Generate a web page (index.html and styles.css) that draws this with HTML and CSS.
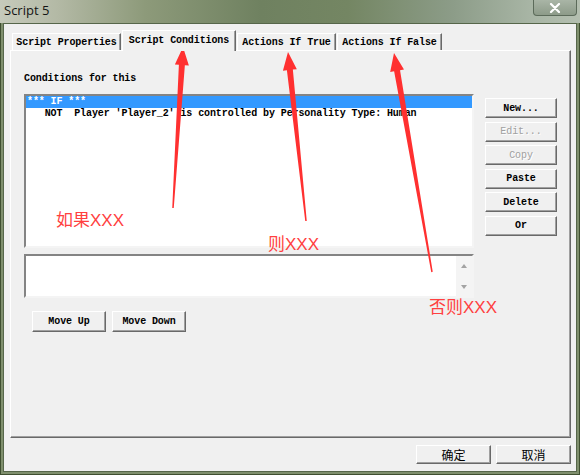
FILE: index.html
```html
<!DOCTYPE html>
<html>
<head>
<meta charset="utf-8">
<title>Script 5</title>
<link rel="stylesheet" href="styles.css">
</head>
<body>
<div class="window">
  <div class="titlebar">
    <span class="title">Script 5</span>
    <div class="close"><svg width="14" height="10" viewBox="0 0 14 10"><path d="M3 1 L11 9 M11 1 L3 9" stroke="#fff" stroke-width="2.2" stroke-linecap="round"/></svg></div>
  </div>
  <div class="frame">
    <div class="client">
      <div class="tabs">
        <div class="tab tab-props">Script Properties</div>
        <div class="tab tab-cond active">Script Conditions</div>
        <div class="tab tab-true">Actions If True</div>
        <div class="tab tab-false">Actions If False</div>
      </div>
      <div class="panel">
        <div class="label">Conditions for this</div>
        <div class="row">
          <div class="listbox">
            <div class="item selected">*** IF ***</div>
            <div class="item">   NOT  Player 'Player_2' is controlled by Personality Type: Human</div>
          </div>
          <div class="side">
            <button class="btn">New...</button>
            <button class="btn disabled">Edit...</button>
            <button class="btn disabled">Copy</button>
            <button class="btn">Paste</button>
            <button class="btn">Delete</button>
            <button class="btn">Or</button>
          </div>
        </div>
        <div class="memo">
          <div class="scroll"><span class="arr up"></span><span class="arr down"></span></div>
        </div>
        <div class="moves">
          <button class="btn move">Move Up</button>
          <button class="btn move">Move Down</button>
        </div>
      </div>
      <div class="footer">
        <button class="btn cjk">确定</button>
        <button class="btn cjk">取消</button>
      </div>
    </div>
  </div>
</div>

<svg class="arrows" width="580" height="475" viewBox="0 0 580 475">
  <polygon points="183,47 188.87,65.4 184.87,65.16 173.75,208.05 172.25,207.95 178.89,64.78 174.89,64.54"/>
  <polygon points="288,52 296.84,69.17 292.86,69.59 306.75,220.92 305.25,221.08 286.9,70.21 282.92,70.63"/>
  <polygon points="394,53 403.98,69.53 400.04,70.22 432.74,271.87 431.26,272.13 394.12,71.24 390.19,71.93"/>
</svg>
<div class="note n1">如果XXX</div>
<div class="note n2">则XXX</div>
<div class="note n3">否则XXX</div>
</body>
</html>
```

FILE: styles.css
```css
html, body {
  margin: 0;
  padding: 0;
}
body {
  width: 580px;
  height: 475px;
  overflow: hidden;
  position: relative;
  font-family: "Liberation Mono", "DejaVu Sans Mono", monospace;
  font-size: 10px;
  letter-spacing: -0.1px;
  color: #000;
  background: #d9e4de;
}
.window {
  height: 475px;
  display: flex;
  flex-direction: column;
  background: #7f8f6d;
}
.titlebar {
  height: 23px;
  flex: none;
  display: flex;
  justify-content: space-between;
  align-items: flex-start;
  background: linear-gradient(90deg, #c6cabb 0%, #b3b9a5 10%, #8d9a7a 25%, #6f8160 45%, #748663 60%, #8c9c88 78%, #a9b6a6 92%, #b4bfb0 100%);
}
.title {
  font-family: "Open Sans", "Noto Sans", sans-serif;
  font-size: 13px;
  letter-spacing: 0;
  line-height: 21px;
  color: #141414;
  padding-left: 4px;
}
.close {
  width: 44px;
  height: 16px;
  box-sizing: border-box;
  margin-right: 3px;
  border: 1px solid #5c6b5a;
  border-top: 0;
  border-radius: 0 0 4px 4px;
  background: linear-gradient(#a9b5a6, #8d9b89);
  display: flex;
  align-items: center;
  justify-content: center;
}
.frame {
  flex: 1;
  display: flex;
  padding: 0 3px 3px 3px;
  box-shadow: inset 1px 0 #3f4f30, inset -1px 0 #3f4f30, inset 0 -1px #3f4f30;
}
.client {
  flex: 1;
  display: flex;
  flex-direction: column;
  background: #f0f0f0;
  border: 1px solid #56664a;
  padding: 6px 5px 0 6px;
}
.tabs {
  height: 20px;
  display: flex;
  align-items: flex-end;
  gap: 1px;
  padding-left: 2px;
}
.tab {
  height: 17px;
  box-sizing: border-box;
  background: #f0f0f0;
  border-top: 1px solid #fff;
  border-left: 1px solid #fff;
  border-right: 1px solid #696969;
  box-shadow: inset -1px 0 #a0a0a0;
  text-align: center;
  line-height: 17px;
  font-weight: bold;
  white-space: nowrap;
}
.tab-props { width: 109px; }
.tab-cond { width: 114px; }
.tab-true { width: 99px; }
.tab-false { width: 105px; }
.tab.active {
  height: 21px;
  margin-bottom: -1px;
  line-height: 19px;
  position: relative;
  z-index: 1;
}
.panel {
  height: 388px;
  box-sizing: border-box;
  border: 1px solid;
  border-color: #fff #696969 #696969 #fff;
  box-shadow: inset -1px -1px #a0a0a0;
  padding: 22px 0 0 13px;
}
.label {
  line-height: 12px;
  height: 12px;
  font-weight: bold;
}
.row {
  display: flex;
  gap: 11px;
  align-items: flex-start;
  margin-top: 9px;
}
.listbox, .memo {
  width: 450px;
  box-sizing: border-box;
  background: #fff;
  border-style: solid;
  border-width: 2px;
  border-color: #848484 #f4f4f4 #f4f4f4 #848484;
}
.listbox {
  height: 154px;
}
.item {
  height: 12px;
  line-height: 12px;
  white-space: pre;
  padding-left: 1px;
  font-weight: bold;
}
.item.selected {
  background: #3399ff;
  color: #fff;
}
.side {
  width: 72px;
  display: flex;
  flex-direction: column;
  gap: 3.6px;
  margin-top: 4px;
}
.btn {
  display: block;
  box-sizing: border-box;
  width: 72px;
  height: 20px;
  margin: 0;
  padding: 0;
  background: #f0f0f0;
  border: 1px solid;
  border-color: #fff #696969 #696969 #fff;
  box-shadow: inset -1px -1px #a0a0a0;
  font-family: "Liberation Mono", "DejaVu Sans Mono", monospace;
  font-size: 10px;
  letter-spacing: -0.1px;
  font-weight: bold;
  color: #000;
  text-align: center;
  line-height: 17px;
}
.btn.disabled {
  color: #a0a0a0;
  font-weight: normal;
  text-shadow: 1px 1px #fff;
}
.memo {
  height: 44px;
  margin-top: 6px;
  display: flex;
  justify-content: flex-end;
}
.scroll {
  width: 16px;
  background: #f4f4f4;
  display: flex;
  flex-direction: column;
  justify-content: space-between;
  align-items: center;
  padding: 8px 0 7px;
  box-sizing: border-box;
}
.arr {
  width: 0;
  height: 0;
  border-left: 3.5px solid transparent;
  border-right: 3.5px solid transparent;
}
.arr.up { border-bottom: 4px solid #a3a3a3; }
.arr.down { border-top: 4px solid #a3a3a3; }
.moves {
  display: flex;
  gap: 6px;
  margin-top: 13px;
  margin-left: 8px;
}
.btn.move {
  width: 74px;
  height: 21px;
  line-height: 18px;
}
.footer {
  display: flex;
  justify-content: flex-end;
  gap: 5px;
  margin-top: 7px;
}
.btn.cjk {
  width: 75px;
  height: 19px;
  font-family: "Noto Sans CJK SC", sans-serif;
  font-size: 12px;
  letter-spacing: 0;
  font-weight: normal;
  line-height: 16px;
}
.arrows {
  position: absolute;
  left: 0;
  top: 0;
  pointer-events: none;
}
.arrows polygon {
  fill: #ff3030;
}
.note {
  position: absolute;
  color: #ff4040;
  font-family: "Liberation Sans", "Noto Sans CJK SC", sans-serif;
  font-size: 17px;
  letter-spacing: 0;
  line-height: 20px;
  white-space: nowrap;
}
.n1 { left: 56px; top: 211px; }
.n2 { left: 268px; top: 235px; }
.n3 { left: 429px; top: 298px; }
```
